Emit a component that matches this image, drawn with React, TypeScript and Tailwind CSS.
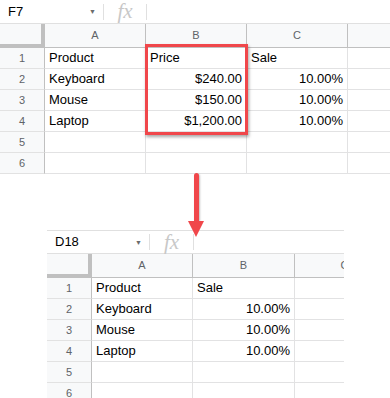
import React from "react";

type Col = { w: number; label: string };
type Cell = { t: string; right?: boolean };

function Sheet({
  name,
  cols,
  rows,
  nameW,
  fxW,
  topBorder,
  widthPx,
}: {
  name: string;
  cols: Col[];
  rows: Cell[][];
  nameW: number;
  fxW: number;
  topBorder?: boolean;
  widthPx: number;
}) {
  const template = `45px ${cols.map((c) => c.w + "px").join(" ")}`;
  return (
    <div
      className="bg-white overflow-hidden"
      style={{ width: widthPx, fontFamily: '"Liberation Sans", Arial, sans-serif' }}
    >
      <div
        className={`flex h-[24px] items-center border-b border-[#e0e0e0] ${topBorder ? "border-t" : ""}`}
      >
        <div className="flex items-center justify-between pl-[8px] pr-[7px]" style={{ width: nameW }}>
          <span className="text-[13px] text-black">{name}</span>
          <span className="text-[7px] text-[#6b6b6b] leading-none">▼</span>
        </div>
        <div className="h-[16px] w-px bg-[#e0e0e0]" />
        <div className="flex items-center justify-center" style={{ width: fxW }}>
          <span
            className="text-[21px] italic text-[#c8c8c8] leading-none"
            style={{ fontFamily: '"Liberation Serif", serif' }}
          >
            fx
          </span>
        </div>
        <div className="h-[16px] w-px bg-[#e0e0e0]" />
      </div>
      <div className="grid" style={{ gridTemplateColumns: template }}>
        <div className="h-[24px] bg-[#f8f9fa] border-r-[4px] border-b-[4px] border-[#c0c0c0]" />
        {cols.map((c, i) => (
          <div
            key={i}
            className="h-[24px] bg-[#f8f9fa] border-r border-b border-[#c0c0c0] flex items-center justify-center text-[11px] text-[#5f6368]"
          >
            {c.label}
          </div>
        ))}
        {rows.map((r, ri) => (
          <React.Fragment key={ri}>
            <div className="h-[21px] bg-[#f8f9fa] border-r border-b border-[#c0c0c0] border-b-[#e2e2e2] flex items-center justify-center text-[11px] text-[#5f6368]">
              {ri + 1}
            </div>
            {cols.map((_, ci) => {
              const cell = r[ci];
              return (
                <div
                  key={ci}
                  className={`h-[21px] border-r border-b border-[#e2e2e3] flex items-center px-[4px] text-[13px] text-black whitespace-nowrap overflow-hidden ${
                    cell?.right ? "justify-end" : "justify-start"
                  }`}
                >
                  {cell?.t ?? ""}
                </div>
              );
            })}
          </React.Fragment>
        ))}
      </div>
    </div>
  );
}

export default function App() {
  const topRows: Cell[][] = [
    [{ t: "Product" }, { t: "Price" }, { t: "Sale" }],
    [{ t: "Keyboard" }, { t: "$240.00", right: true }, { t: "10.00%", right: true }],
    [{ t: "Mouse" }, { t: "$150.00", right: true }, { t: "10.00%", right: true }],
    [{ t: "Laptop" }, { t: "$1,200.00", right: true }, { t: "10.00%", right: true }],
    [],
    [],
  ];
  const botRows: Cell[][] = [
    [{ t: "Product" }, { t: "Sale" }],
    [{ t: "Keyboard" }, { t: "10.00%", right: true }],
    [{ t: "Mouse" }, { t: "10.00%", right: true }],
    [{ t: "Laptop" }, { t: "10.00%", right: true }],
    [],
    [],
  ];
  return (
    <div className="relative w-[390px] h-[398px] bg-white overflow-hidden">
      <Sheet
        name="F7"
        nameW={103}
        fxW={42}
        widthPx={390}
        cols={[
          { w: 101, label: "A" },
          { w: 101, label: "B" },
          { w: 101, label: "C" },
          { w: 60, label: "" },
        ]}
        rows={topRows}
      />
      <div className="mt-[56px] ml-[47px]">
        <Sheet
          name="D18"
          nameW={102}
          fxW={43}
          topBorder
          widthPx={297}
          cols={[
            { w: 101, label: "A" },
            { w: 102, label: "B" },
            { w: 100, label: "C" },
          ]}
          rows={botRows}
        />
      </div>
      {/* red highlight box */}
      <div className="absolute left-[145px] top-[44px] w-[103px] h-[91px] border-[3px] border-[#f0474b] shadow-[1px_2px_3px_rgba(0,0,0,0.35)]" />
      {/* arrow */}
      <div className="absolute left-[188px] top-[173px] w-[16px] h-[64px] flex flex-col items-center">
        <div className="w-[5px] flex-1 bg-[#f0474b] rounded-t-full shadow-[1px_1px_2px_rgba(0,0,0,0.25)]" />
        <svg width="16" height="16" viewBox="0 0 16 16" className="block">
          <polygon points="0,0 16,0 8,16" fill="#f0474b" />
        </svg>
      </div>
    </div>
  );
}
